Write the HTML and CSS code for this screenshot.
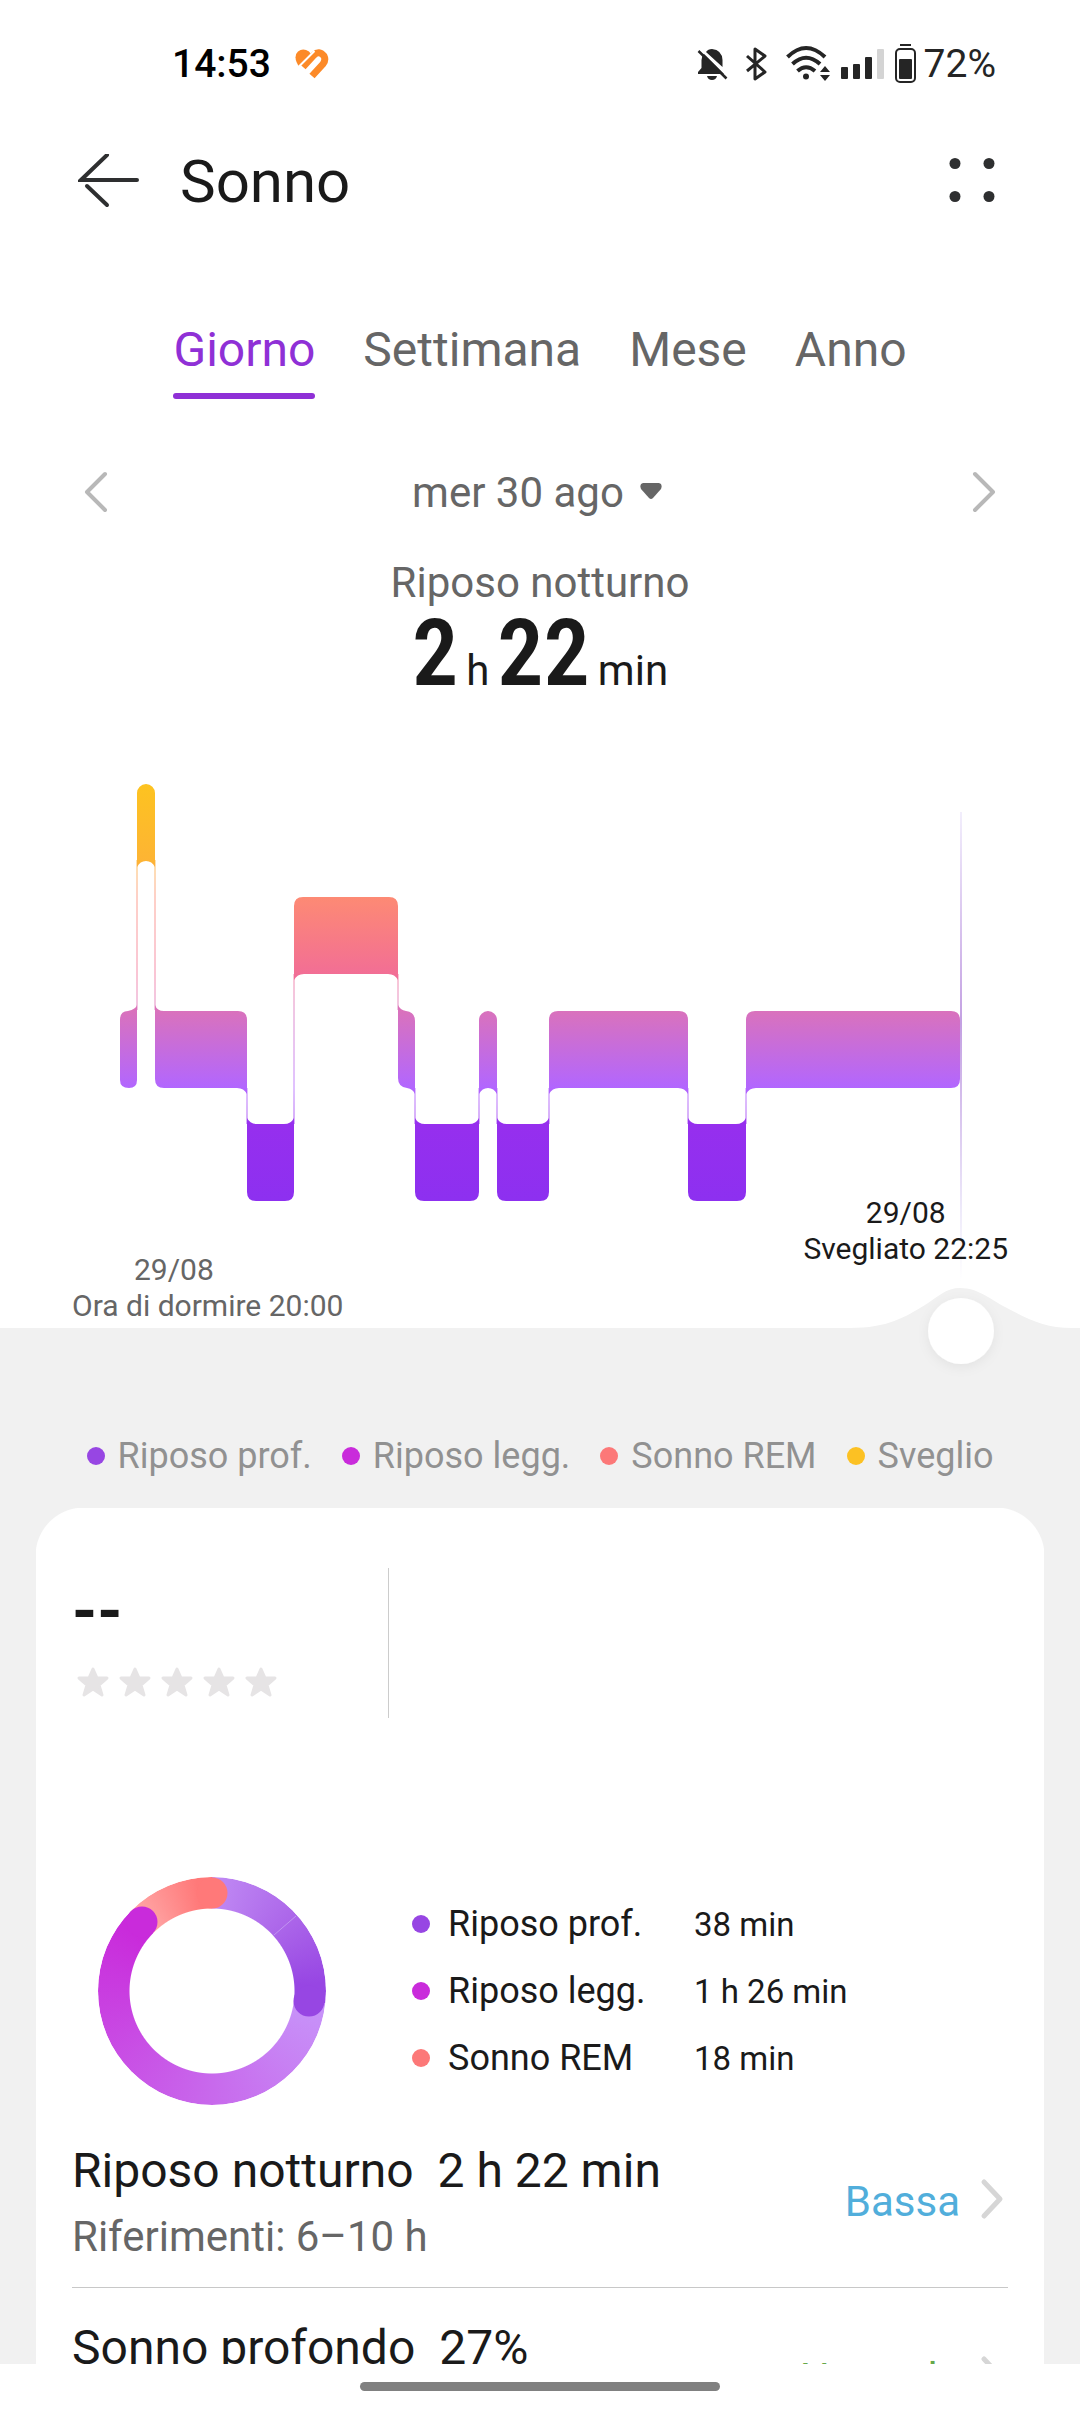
FILE: index.html
```html
<!DOCTYPE html>
<html lang="it">
<head>
<meta charset="utf-8">
<meta name="viewport" content="width=device-width, initial-scale=1">
<title>Sonno</title>
<link rel="stylesheet" href="styles.css">
</head>
<body>
<div class="app">
  <div class="status">
    <div class="status-group">
      <span class="clock">14:53</span>
      <svg width="34" height="30" viewBox="0 0 34 30" fill="none" stroke="#fc8a28" stroke-width="7" aria-hidden="true">
        <path d="M17 27 L28 15 Q31 11 29 7 Q24 1 19 6 L8 18" stroke-linejoin="round"/>
        <path d="M16 5 L3.500 17 L1.500 13 Q-1 6 3 2.500 Q8 -1.500 14 2.500Z" fill="#fc8a28" stroke="none"/>
        <path d="M19.500 2 L2 19.500" stroke="#fff" stroke-width="2"/>
      </svg>
    </div>
    <div class="status-group status-icons">
      <svg width="41" height="40" viewBox="0 0 41 40" fill="#252525" aria-hidden="true">
        <path d="M1 30 V28 L4.500 24 V16 Q4.500 12 7 9.500 L27 30Z M9 8 Q11 5 15 5 Q25 6 25.500 16 V23Z M10 32 H20 Q19 36 15 36 Q11 36 10 32Z"/>
        <path d="M1.500 7 L29.500 34.500" stroke="#252525" stroke-width="2.500"/>
        <path d="M3.500 5 L31 31.500" stroke="#fff" stroke-width="2"/>
      </svg>
      <svg width="32" height="40" viewBox="0 0 32 40" fill="none" stroke="#252525" stroke-width="3" aria-hidden="true">
        <path d="M1 12 L19 28 L9 35 V5 L19 12 L1 27" stroke-linejoin="round"/>
      </svg>
      <svg width="47" height="40" viewBox="0 0 47 40" fill="none" stroke="#252525" stroke-width="4" aria-hidden="true">
        <path d="M1.500 13 Q20 -5 39 13 M6.500 20 Q20 7.500 34 20 M11.500 27 Q20 19.500 29 27"/>
        <circle cx="20" cy="32.500" r="3" fill="#252525" stroke="none"/>
        <path d="M34 28 L39 22 L44 28Z M34 31 L39 37 L44 31Z" fill="#252525" stroke="none"/>
      </svg>
      <svg width="46" height="40" viewBox="0 0 46 40" fill="#252525" aria-hidden="true">
        <rect x="0" y="23" width="7" height="12" rx="1"/>
        <rect x="12" y="20" width="7" height="15" rx="1"/>
        <rect x="24" y="13" width="7" height="22" rx="1"/>
        <rect x="36" y="5" width="7" height="30" rx="1" fill="#d4d4d4"/>
      </svg>
      <svg width="21" height="40" viewBox="0 0 21 40" aria-hidden="true">
        <rect x="5" y="0" width="11" height="2" fill="#252525"/>
        <rect x="1" y="5" width="19" height="33" rx="4" fill="none" stroke="#252525" stroke-width="2"/>
        <rect x="4" y="15" width="13" height="20" rx="1" fill="#252525"/>
      </svg>
      <span class="battery">72%</span>
    </div>
  </div>

  <main class="content">
    <header class="appbar">
      <button class="icon-button" type="button" aria-label="Indietro">
        <svg width="64" height="56" viewBox="0 2 64 56" fill="none" stroke="#2e2f30" stroke-width="4" stroke-linecap="round" aria-hidden="true">
          <path d="M59 28 H3 L29 3"/>
          <path d="M9 34 L29 53"/>
        </svg>
      </button>
      <h1 class="title">Sonno</h1>
      <button class="icon-button" type="button" aria-label="Menu">
        <svg width="48" height="48" viewBox="0 2 48 48" fill="#2e2f30" aria-hidden="true">
          <circle cx="7" cy="7.500" r="5.500"/><circle cx="41" cy="7.500" r="5.500"/>
          <circle cx="7" cy="40.500" r="5.500"/><circle cx="41" cy="40.500" r="5.500"/>
        </svg>
      </button>
    </header>

    <div class="tabs" role="tablist">
      <button class="tab tab-active" type="button" role="tab" aria-selected="true">Giorno</button>
      <button class="tab" type="button" role="tab" aria-selected="false">Settimana</button>
      <button class="tab" type="button" role="tab" aria-selected="false">Mese</button>
      <button class="tab" type="button" role="tab" aria-selected="false">Anno</button>
    </div>

    <div class="dates">
      <button class="icon-button" type="button" aria-label="Giorno precedente">
        <svg width="24" height="48" viewBox="0 1 24 48" fill="none" stroke="#b8b8b8" stroke-width="4" stroke-linecap="round" stroke-linejoin="round" aria-hidden="true"><path d="M21 6 L3 24 L21 42"/></svg>
      </button>
      <button class="date" type="button">mer 30 ago
        <svg width="22" height="20" viewBox="0 0 22 20" fill="#666" aria-hidden="true"><path d="M3 0 H19 Q23 1 21 6 L13 15 Q11 17 9 15 L1 6 Q-1 1 3 0Z"/></svg>
      </button>
      <button class="icon-button" type="button" aria-label="Giorno successivo">
        <svg width="24" height="48" viewBox="0 1 24 48" fill="none" stroke="#b8b8b8" stroke-width="4" stroke-linecap="round" stroke-linejoin="round" aria-hidden="true"><path d="M3 6 L21 24 L3 42"/></svg>
      </button>
    </div>

    <section class="total">
      <h2 class="total-name">Riposo notturno</h2>
      <p class="total-value"><b>2</b><span>h</span><b>22</b><span>min</span></p>
    </section>

    <section class="chart" aria-label="Fasi del sonno">
      <svg class="chart-plot" viewBox="0 0 1080 620" aria-hidden="true">
        <defs>
          <linearGradient id="stages" gradientUnits="userSpaceOnUse" x1="0" y1="24" x2="0" y2="441">
            <stop offset="0" stop-color="#fdc320"/>
            <stop offset="0.185" stop-color="#fdb434"/>
            <stop offset="0.271" stop-color="#fd8a74"/>
            <stop offset="0.456" stop-color="#f26e95"/>
            <stop offset="0.544" stop-color="#d972bc"/>
            <stop offset="0.729" stop-color="#b266ff"/>
            <stop offset="0.815" stop-color="#962fee"/>
            <stop offset="1" stop-color="#8d30f0"/>
          </linearGradient>
          <linearGradient id="cursor" x1="0" y1="0" x2="0" y2="1">
            <stop offset="0" stop-color="#f2eefc"/>
            <stop offset="0.45" stop-color="#c3a0e2"/>
            <stop offset="0.85" stop-color="#eeeafa"/>
            <stop offset="1" stop-color="#ffffff"/>
          </linearGradient>
          <filter id="shadow" x="-50%" y="-50%" width="200%" height="200%">
            <feDropShadow dx="0" dy="3" stdDeviation="6" flood-color="#000" flood-opacity="0.06"/>
          </filter>
        </defs>
        <path fill="#f1f1f1" d="M0 568 H850 C888 568 905 557 925 545 C939 536 946 528 960 528 C978 528 990 539 1005 547 C1030 560 1045 568 1072 568 H1080 V620 H0Z"/>
        <rect x="960" y="52" width="2" height="469" fill="url(#cursor)"/>
        <g fill="url(#stages)">
          <path d="M120 260 Q120 251 128 251 Q136 249 137 245 V320 Q137 328 129 328 Q120 328 120 320Z"/>
          <path d="M137 33 A9 9 0 0 1 155 33 V107 Q152 101 146 101 Q140 101 137 107Z"/>
          <path d="M155 245 Q157 251 164 251 H238 Q247 251 247 260 V334 Q244 328 237 328 H164 Q155 328 155 319Z"/>
          <path d="M247 358 Q250 364 257 364 H284 Q291 364 294 358 V432 Q294 441 285 441 H256 Q247 441 247 432Z"/>
          <path d="M294 146 Q294 137 303 137 H389 Q398 137 398 146 V220 Q395 214 388 214 H304 Q297 214 294 220Z"/>
          <path d="M398 245 Q400 250 406 251 Q415 252 415 261 V334 Q413 329 407 328 Q398 327 398 318Z"/>
          <path d="M415 358 Q418 364 425 364 H469 Q476 364 479 358 V432 Q479 441 470 441 H424 Q415 441 415 432Z"/>
          <path d="M479 260 A9 9 0 0 1 497 260 V334 Q494 328 488 328 Q482 328 479 334Z"/>
          <path d="M497 358 Q500 364 507 364 H539 Q546 364 549 358 V432 Q549 441 540 441 H506 Q497 441 497 432Z"/>
          <path d="M549 260 Q549 251 558 251 H679 Q688 251 688 260 V334 Q685 328 678 328 H559 Q552 328 549 334Z"/>
          <path d="M688 358 Q691 364 698 364 H736 Q743 364 746 358 V432 Q746 441 737 441 H697 Q688 441 688 432Z"/>
          <path d="M746 260 Q746 251 755 251 H951 Q960 251 960 260 V319 Q960 328 951 328 H756 Q749 328 746 334Z"/>
        </g>
        <path fill="none" stroke="url(#stages)" stroke-width="1" opacity="0.8" d="M137 100 V250 M155 100 V250 M247 328 V364 M294 214 V364 M398 214 V250 M415 328 V364 M479 328 V364 M497 328 V364 M549 328 V364 M688 328 V364 M746 328 V364"/>
        <circle cx="961" cy="571" r="33" fill="#fff" filter="url(#shadow)"/>
      </svg>
      <div class="chart-labels">
        <p class="label-start"><span class="label-date">29/08</span><span>Ora di dormire 20:00</span></p>
        <p class="label-end"><span>29/08</span><span>Svegliato 22:25</span></p>
      </div>
    </section>

    <ul class="legend">
      <li><i class="dot dot-deep"></i>Riposo prof.</li>
      <li><i class="dot dot-light"></i>Riposo legg.</li>
      <li><i class="dot dot-rem"></i>Sonno REM</li>
      <li><i class="dot dot-awake"></i>Sveglio</li>
    </ul>

    <section class="card">
      <div class="score">
        <strong class="score-value">--</strong>
        <svg width="210" height="32" viewBox="0 0 210 32" aria-hidden="true">
          <defs><path id="star" d="M21 3 L25 12 H35 L27 19 L30 29 L21 23 L12 29 L15 19 L7 12 H17Z"/></defs>
          <g fill="#e6e4e5" stroke="#e6e4e5" stroke-width="3" stroke-linejoin="round">
            <use href="#star"/><use href="#star" x="42"/><use href="#star" x="84"/><use href="#star" x="126"/><use href="#star" x="168"/>
          </g>
        </svg>
      </div>

      <div class="breakdown">
        <div class="donut">
          <div class="donut-ring"></div>
          <svg class="donut-caps" viewBox="0 0 228 228" aria-hidden="true">
            <path d="M176 58 L198 39" stroke="#c294f0" stroke-width="1"/>
            <circle cx="211" cy="124" r="15.500" fill="#9746e3"/>
            <circle cx="44" cy="45" r="15.500" fill="#c92bdb"/>
            <circle cx="114" cy="16" r="15.500" fill="#ff7979"/>
          </svg>
        </div>
        <ul class="stages">
          <li><i class="dot dot-deep"></i><span>Riposo prof.</span><span class="stage-time">38 min</span></li>
          <li><i class="dot dot-light"></i><span>Riposo legg.</span><span class="stage-time">1 h 26 min</span></li>
          <li><i class="dot dot-rem"></i><span>Sonno REM</span><span class="stage-time">18 min</span></li>
        </ul>
      </div>

      <a class="row" href="#riposo">
        <span class="row-text">
          <span class="row-title"><span>Riposo notturno</span><span>2 h 22 min</span></span>
          <span class="row-note">Riferimenti: 6–10 h</span>
        </span>
        <span class="row-state state-low">Bassa</span>
        <svg width="28" height="48" viewBox="0 0 28 48" fill="none" stroke="#d6d6d6" stroke-width="5" stroke-linecap="round" stroke-linejoin="round" aria-hidden="true"><path d="M4 7 L20 24 L4 41"/></svg>
      </a>
      <a class="row" href="#profondo">
        <span class="row-text">
          <span class="row-title"><span>Sonno profondo</span><span>27%</span></span>
        </span>
        <span class="row-state state-normal">Normale</span>
        <svg width="28" height="48" viewBox="0 0 28 48" fill="none" stroke="#d6d6d6" stroke-width="5" stroke-linecap="round" stroke-linejoin="round" aria-hidden="true"><path d="M4 7 L20 24 L4 41"/></svg>
      </a>
    </section>
  </main>

  <div class="navbar"><span class="navbar-pill"></span></div>
</div>
</body>
</html>
```
FILE: styles.css
```css
* {
  box-sizing: border-box;
}

body {
  margin: 0;
  background: #fff;
  color: #1a1a1a;
  font-family: Roboto, "Noto Sans", sans-serif;
}

h1, h2, p, ul {
  margin: 0;
  padding: 0;
  font-weight: 400;
}

ul {
  list-style: none;
}

svg {
  display: block;
  flex: none;
}

button {
  padding: 0;
  border: 0;
  background: none;
  color: inherit;
  font: inherit;
}

.app {
  display: flex;
  flex-direction: column;
  height: 100vh;
}

/* System status bar */
.status {
  display: flex;
  flex: none;
  align-items: center;
  justify-content: space-between;
  height: 128px;
  padding: 0 84px 0 172px;
}

.status-group {
  display: flex;
  align-items: center;
  gap: 24px;
}

.status-icons {
  gap: 8px;
}

.clock,
.battery {
  font-size: 39px;
  line-height: 48px;
}

.clock {
  color: #000;
  font-weight: 500;
}

.battery {
  color: #252525;
}

.content {
  flex: 1;
  min-height: 0;
  overflow: hidden;
}

.appbar {
  display: flex;
  align-items: center;
  gap: 38px;
  height: 108px;
  padding: 0 84px 0 78px;
}

.title {
  flex: 1;
  font-size: 60px;
  line-height: 72px;
}

.tabs {
  display: flex;
  justify-content: center;
  gap: 48px;
  margin-top: 86px;
}

.tab {
  color: #666;
  font-size: 48px;
  line-height: 56px;
}

.tab-active {
  color: #8f30d6;
}

.tab::after {
  content: "";
  display: block;
  height: 6px;
  margin-top: 15px;
  border-radius: 3px;
}

.tab-active::after {
  background: #8f30d6;
}

.dates {
  display: flex;
  align-items: center;
  justify-content: space-between;
  height: 56px;
  margin-top: 66px;
  padding: 0 84px;
}

.date {
  display: flex;
  align-items: center;
  gap: 16px;
  padding-right: 6px;
  color: #666;
  font-size: 42px;
  line-height: 56px;
}

.total {
  margin-top: 37px;
  text-align: center;
}

.total-name {
  color: #666;
  font-size: 42px;
  line-height: 50px;
}

.total-value {
  display: flex;
  align-items: baseline;
  justify-content: center;
  gap: 8px;
  height: 92px;
  font-size: 42px;
  line-height: 48px;
}

.total-value b {
  font-family: "Roboto Condensed", Roboto, sans-serif;
  font-size: 92px;
  font-weight: 600;
  line-height: 92px;
}

/* Chart with its labels laid over the plot */
.chart {
  display: grid;
  margin-top: 60px;
}

.chart-plot,
.chart-labels {
  grid-area: 1 / 1;
  width: 100%;
}

.chart-labels {
  display: flex;
  align-items: flex-end;
  justify-content: space-between;
  padding: 0 72px;
  font-size: 30px;
  line-height: 36px;
}

.chart-labels span {
  display: block;
}

.label-start {
  padding-bottom: 56px;
  color: #666;
}

.label-date {
  padding-left: 62px;
}

.label-end {
  padding-bottom: 113px;
  text-align: center;
}

.legend {
  display: flex;
  justify-content: center;
  gap: 30px;
  padding: 51px 0 27px;
  background: #f1f1f1;
  color: #919191;
  font-size: 36px;
  line-height: 50px;
}

.legend li {
  display: flex;
  align-items: center;
  gap: 13px;
}

.dot {
  width: 18px;
  height: 18px;
  border-radius: 50%;
}

.dot-deep {
  background: #9746e3;
}

.dot-light {
  background: #c92bdb;
}

.dot-rem {
  background: #fc7878;
}

.dot-awake {
  background: #fcc123;
}

.card {
  padding: 60px 36px 0;
  border: solid #f1f1f1;
  border-width: 0 36px;
  background: radial-gradient(circle at 48px 48px, #fff 48px, #f1f1f1 49px) 0 0 / 48px 48px no-repeat,
    radial-gradient(circle at 0 48px, #fff 48px, #f1f1f1 49px) 100% 0 / 48px 48px no-repeat,
    #fff;
}

.score {
  display: flex;
  flex-direction: column;
  align-items: flex-start;
  width: 317px;
  height: 150px;
  padding-top: 8px;
  border-right: 1px solid #ccc;
}

.score-value {
  margin-bottom: 18px;
  font-size: 64px;
  font-weight: 700;
  line-height: 72px;
}

.breakdown {
  display: flex;
  align-items: center;
  gap: 86px;
  margin-top: 159px;
  padding: 0 26px;
}

.donut {
  display: grid;
  width: 228px;
  height: 228px;
}

.donut-ring,
.donut-caps {
  grid-area: 1 / 1;
}

.donut-caps {
  z-index: 1;
}

.donut-ring {
  border-radius: 50%;
  background: conic-gradient(#c08af4 0deg, #ad68ea 45deg, #9746e3 86deg 96deg, #c794f9 96deg, #c869ec 180deg, #c92bdb 306deg 315deg, #ffa8a8 315deg, #ff7979 352deg);
  -webkit-mask: radial-gradient(circle, transparent 82px, #000 83px);
  mask: radial-gradient(circle, transparent 82px, #000 83px);
}

.stages li {
  display: grid;
  grid-template-columns: 18px 228px auto;
  align-items: center;
  gap: 18px;
  font-size: 36px;
  line-height: 67px;
}

.stage-time {
  font-size: 33px;
}

.row {
  display: flex;
  align-items: center;
  height: 176px;
  margin-top: 6px;
  color: inherit;
  text-decoration: none;
}

.row + .row {
  margin-top: 0;
  border-top: 1px solid #c8c8c8;
}

.row-text {
  display: flex;
  flex: 1;
  flex-direction: column;
  align-self: flex-start;
  gap: 8px;
  padding-top: 32px;
}

.row-title {
  display: flex;
  gap: 24px;
  font-size: 48px;
  line-height: 56px;
}

.row-note {
  color: #666;
  font-size: 42px;
  line-height: 60px;
}

.row-state {
  padding: 6px 20px 0 0;
  font-size: 42px;
  line-height: 56px;
}

.state-low {
  color: #51aedb;
}

.state-normal {
  color: #66a84a;
}

/* Gesture bar */
.navbar {
  display: flex;
  flex: none;
  align-items: center;
  justify-content: center;
  height: 48px;
  padding-bottom: 4px;
  background: #fff;
}

.navbar-pill {
  width: 360px;
  height: 9px;
  border-radius: 5px;
  background: #808080;
}
```
